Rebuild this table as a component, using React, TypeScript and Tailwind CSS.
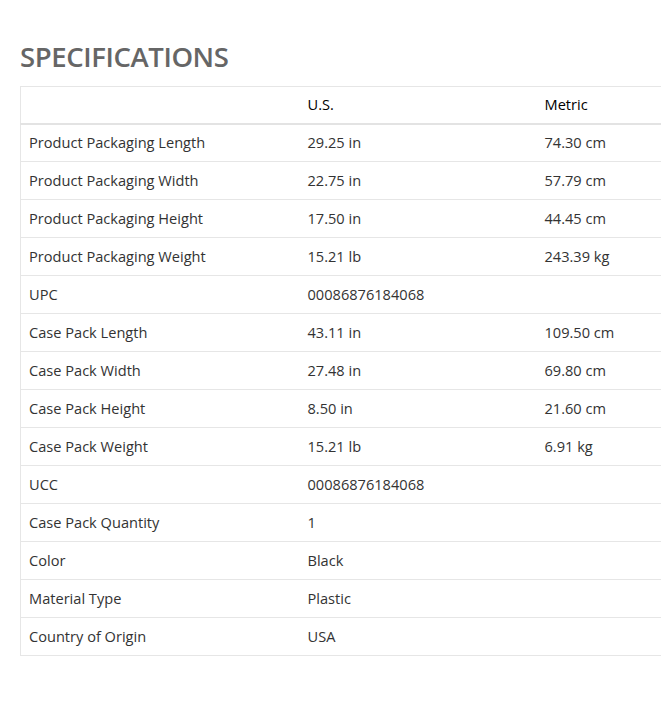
import React from "react";

const rows: [string, string, string][] = [
  ["Product Packaging Length", "29.25 in", "74.30 cm"],
  ["Product Packaging Width", "22.75 in", "57.79 cm"],
  ["Product Packaging Height", "17.50 in", "44.45 cm"],
  ["Product Packaging Weight", "15.21 lb", "243.39 kg"],
  ["UPC", "00086876184068", ""],
  ["Case Pack Length", "43.11 in", "109.50 cm"],
  ["Case Pack Width", "27.48 in", "69.80 cm"],
  ["Case Pack Height", "8.50 in", "21.60 cm"],
  ["Case Pack Weight", "15.21 lb", "6.91 kg"],
  ["UCC", "00086876184068", ""],
  ["Case Pack Quantity", "1", ""],
  ["Color", "Black", ""],
  ["Material Type", "Plastic", ""],
  ["Country of Origin", "USA", ""],
];

export default function App() {
  return (
    <div className="w-[661px] h-[702px] overflow-hidden bg-white font-['Open_Sans',sans-serif]">
      <div className="pl-5 pt-[38px]">
        <h2 className="text-[27.5px] leading-[38px] font-semibold tracking-[-0.4px] text-[#666]">
          SPECIFICATIONS
        </h2>
        <table className="mt-[10px] w-[720px] border-collapse text-[14.6px] text-[#333]">
          <thead>
            <tr className="h-[37px] border-t border-l border-[#e6e6e6] border-b-2 border-b-[#e3e3e3]">
              <th className="w-[279px] px-2 text-left font-normal"></th>
              <th className="w-[237px] px-2 text-left font-normal text-black">U.S.</th>
              <th className="px-2 text-left font-normal text-black">Metric</th>
            </tr>
          </thead>
          <tbody>
            {rows.map(([label, us, metric]) => (
              <tr key={label} className="h-[38px] border-l border-b border-[#e6e6e6]">
                <td className="px-2">{label}</td>
                <td className="px-2">{us}</td>
                <td className="px-2">{metric}</td>
              </tr>
            ))}
          </tbody>
        </table>
      </div>
    </div>
  );
}
